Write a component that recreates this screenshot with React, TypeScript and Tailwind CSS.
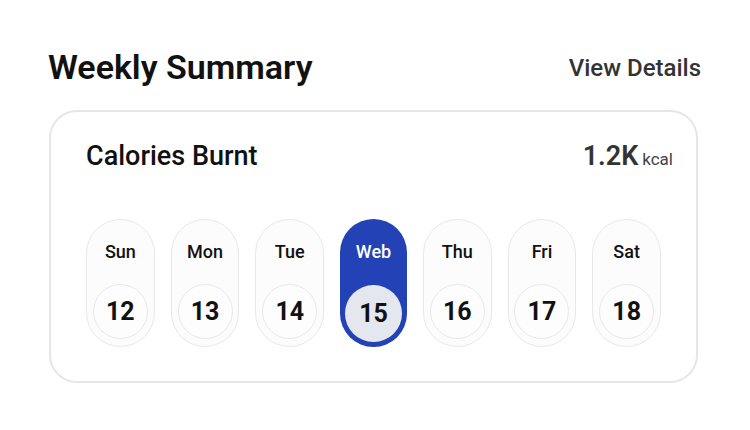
const days = [
  { label: 'Sun', date: 12 },
  { label: 'Mon', date: 13 },
  { label: 'Tue', date: 14 },
  { label: 'Web', date: 15, active: true },
  { label: 'Thu', date: 16 },
  { label: 'Fri', date: 17 },
  { label: 'Sat', date: 18 },
];

export default function App() {
  return (
    <div
      className="w-[750px] h-[430px] bg-white"
      style={{ fontFamily: 'Roboto, "Liberation Sans", sans-serif' }}
    >
      <div className="ml-[49px] w-[652px] pt-[47px]">
        <div className="flex items-center justify-between">
          <h1 className="text-[34px] leading-[40px] font-semibold text-[#111] -ml-[1px]">
            Weekly Summary
          </h1>
          <button className="text-[24px] leading-[28px] font-medium text-[#333] mt-[2px]">
            View Details
          </button>
        </div>

        <div className="mt-[23px] w-[649px] h-[273px] rounded-[28px] border-2 border-[#e6e6e6] px-[35px] pt-[28px]">
          <div className="flex items-center justify-between">
            <h2 className="text-[27px] leading-[32px] font-medium text-[#111]">Calories Burnt</h2>
            <div className="flex items-baseline gap-[4px] mr-[-12px]">
              <span className="text-[27px] leading-[32px] font-semibold text-[#333]">1.2K</span>
              <span className="text-[17px] text-[#444]">kcal</span>
            </div>
          </div>

          <div className="mt-[46px] flex gap-[16px]">
            {days.map((d) =>
              d.active ? (
                <div
                  key={d.label}
                  className="flex-1 h-[128px] rounded-full bg-[#2342b5] flex flex-col items-center pt-[23px] pb-[5px] justify-between"
                >
                  <span className="text-[18px] leading-[20px] font-medium text-white">{d.label}</span>
                  <div className="w-[57px] h-[57px] rounded-full bg-[#e5e7ee] flex items-center justify-center pt-[2px]">
                    <span className="text-[25px] font-bold text-[#111]">{d.date}</span>
                  </div>
                </div>
              ) : (
                <div
                  key={d.label}
                  className="flex-1 h-[128px] rounded-full bg-[#fcfcfc] border border-[#e8e8e8] flex flex-col items-center pt-[22px] pb-[7px] justify-between"
                >
                  <span className="text-[18px] leading-[20px] font-medium text-[#111]">{d.label}</span>
                  <div className="w-[55px] h-[55px] rounded-full border border-[#e8e8e8] bg-[#fdfdfd] flex items-center justify-center pt-[2px]">
                    <span className="text-[25px] font-bold text-[#111]">{d.date}</span>
                  </div>
                </div>
              )
            )}
          </div>
        </div>
      </div>
    </div>
  );
}
